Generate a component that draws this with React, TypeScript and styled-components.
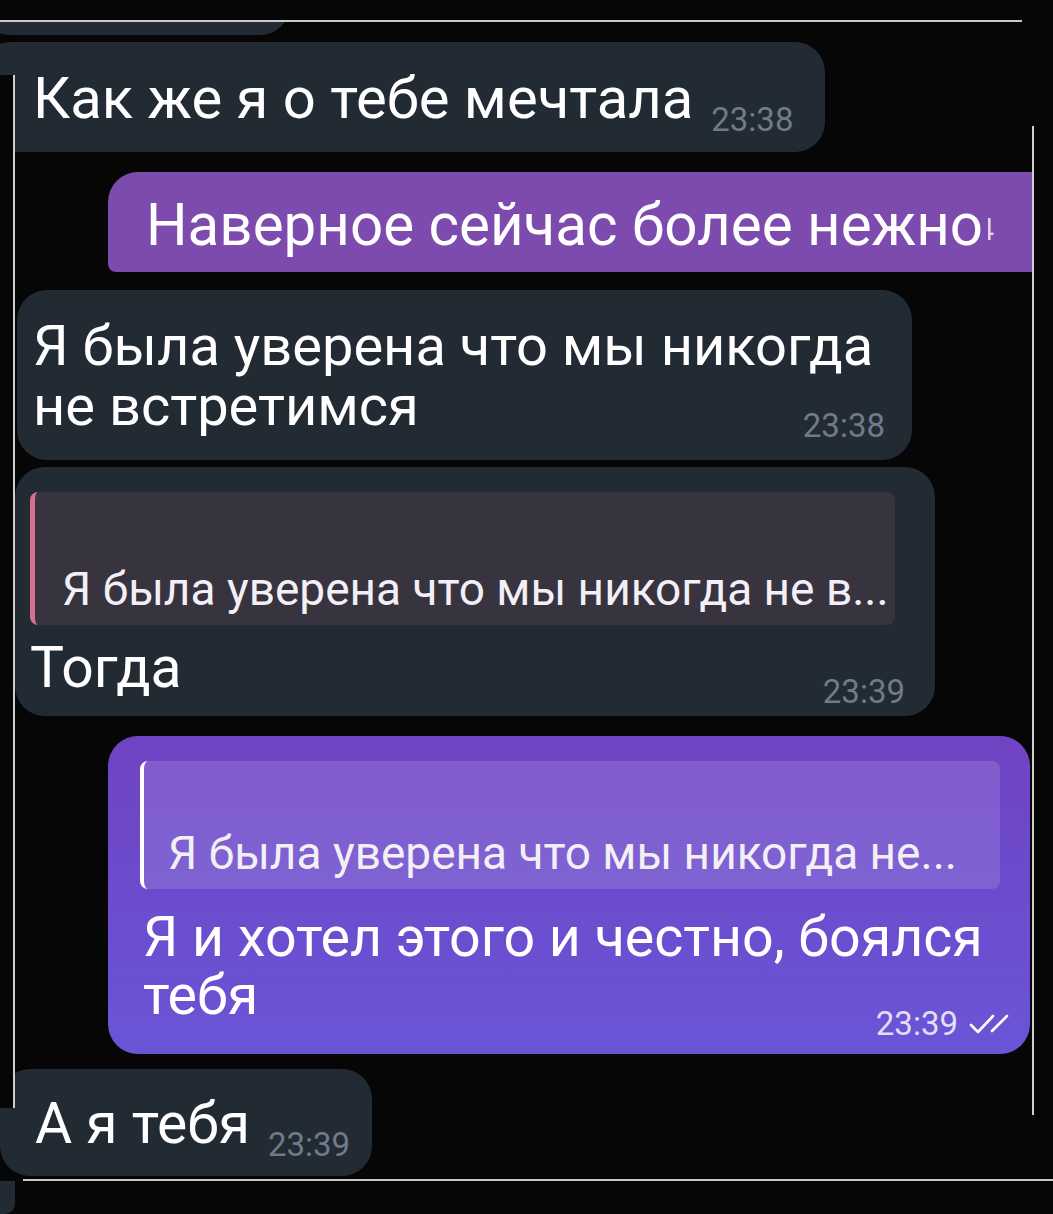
import React from 'react'
import styled, { createGlobalStyle } from 'styled-components'

const GlobalStyle = createGlobalStyle`
  html, body {
    margin: 0;
    padding: 0;
    background: #060607;
  }
  body {
    font-family: Roboto, 'Noto Sans', 'Liberation Sans', sans-serif;
  }
`

const Screen = styled.div`
  position: relative;
  width: 1053px;
  height: 1214px;
  overflow: hidden;
  background: #060607;
`

const Feed = styled.div`
  margin-top: 22px;
  height: 1157px;
  overflow: hidden;
  display: flex;
  flex-direction: column;
`

const Row = styled.div<{ $out?: boolean; $gap: number }>`
  display: flex;
  justify-content: ${({ $out }) => ($out ? 'flex-end' : 'flex-start')};
  margin-top: ${({ $gap }) => $gap}px;
  flex-shrink: 0;
`

type Tone = 'gray' | 'violet' | 'indigo'

const tones: Record<Tone, string> = {
  gray: '#222a33',
  violet: '#7d4aae',
  indigo: 'linear-gradient(180deg, #6f43c4 0%, #6c4ccd 50%, #6a55d6 100%)',
}

const Bubble = styled.div<{
  $tone: Tone
  $w: number
  $ml?: number
  $mr?: number
  $pad: string
  $radius?: string
}>`
  box-sizing: border-box;
  width: ${({ $w }) => $w}px;
  margin-left: ${({ $ml = 0 }) => $ml}px;
  margin-right: ${({ $mr = 0 }) => $mr}px;
  padding: ${({ $pad }) => $pad};
  background: ${({ $tone }) => tones[$tone]};
  border-radius: ${({ $radius = '30px' }) => $radius};
  color: #ffffff;
  flex-shrink: 0;
`

const Fragment = styled.div`
  box-sizing: border-box;
  width: 310px;
  height: 60px;
  margin-left: -20px;
  margin-top: -47px;
  background: #222a33;
  border-radius: 30px;
  flex-shrink: 0;
`

const Line = styled.div<{ $size: number; $lh: number; $indent?: number }>`
  font-size: ${({ $size }) => $size}px;
  line-height: ${({ $lh }) => $lh}px;
  padding-left: ${({ $indent = 0 }) => $indent}px;
  white-space: nowrap;
`

const LastLine = styled.div`
  display: flex;
  align-items: flex-end;
  justify-content: space-between;
  gap: 18px;
`

const Time = styled.span<{ $light?: boolean; $drop?: number }>`
  display: inline-flex;
  align-items: center;
  gap: 10px;
  font-size: 33px;
  line-height: 33px;
  color: ${({ $light }) => ($light ? 'rgba(255,255,255,0.82)' : '#6e7b88')};
  margin-bottom: ${({ $drop = 0 }) => -$drop}px;
  white-space: nowrap;
`

const Quote = styled.div<{ $tone: 'dark' | 'light'; $m: string; $pad: string }>`
  margin: ${({ $m }) => $m};
  padding: ${({ $pad }) => $pad};
  border-radius: 8px;
  background: ${({ $tone }) => ($tone === 'dark' ? '#38343f' : 'rgba(255, 255, 255, 0.13)')};
  border-left: ${({ $tone }) => ($tone === 'dark' ? '5px solid #d3718f' : '4px solid #ffffff')};
  color: #f2f0f6;
`

const Clip = styled.span`
  display: inline-block;
  width: 6px;
  overflow: hidden;
  direction: rtl;
  font-size: 31px;
  line-height: 31px;
  color: rgba(255, 255, 255, 0.8);
  vertical-align: baseline;
  margin-left: 5px;
`

const TopRule = styled.div`
  position: absolute;
  top: 20px;
  left: 0;
  width: 1022px;
  height: 2px;
  background: #c9c9c9;
`

const LeftMask = styled.div`
  position: absolute;
  top: 75px;
  left: 0;
  width: 13px;
  height: 1033px;
  background: #060607;
  border-right: 2px solid #cfcfcf;
`

const RightMask = styled.div`
  position: absolute;
  top: 126px;
  left: 1032px;
  width: 21px;
  height: 989px;
  background: #060607;
  border-left: 2px solid #cfcfcf;
`

const BottomRule = styled.div`
  position: absolute;
  top: 1179px;
  left: 23px;
  right: 0;
  height: 2px;
  background: #c9c9c9;
`

const Tail = styled.div`
  position: absolute;
  top: 1181px;
  left: 0;
  width: 15px;
  height: 33px;
  background: #222a33;
  border-radius: 0 0 10px 0;
`

const DoubleCheck = () => (
  <svg width="42" height="22" viewBox="0 0 42 22" fill="none">
    <path d="M3 12 L10 19 L25 3" stroke="#fff" strokeWidth="2.6" strokeLinecap="round" strokeLinejoin="round" />
    <path d="M24 18 L39 3" stroke="#fff" strokeWidth="2.6" strokeLinecap="round" />
  </svg>
)

const App = () => {
  return (
    <>
      <GlobalStyle />
      <Screen>
        <Feed>
          <Row $gap={0}>
            <Fragment />
          </Row>

          <Row $gap={7}>
            <Bubble $tone="gray" $w={845} $ml={-20} $pad="25px 35px 23px 53px">
              <LastLine>
                <Line $size={58} $lh={62}>Как же я о тебе мечтала</Line>
                <Time $drop={7}>23:38</Time>
              </LastLine>
            </Bubble>
          </Row>

          <Row $out $gap={20}>
            <Bubble $tone="violet" $w={966} $mr={-21} $pad="23px 0 17px 38px" $radius="30px 0 0 8px">
              <Line $size={58.3} $lh={60}>
                Наверное сейчас более нежно<Clip>4</Clip>
              </Line>
            </Bubble>
          </Row>

          <Row $gap={18}>
            <Bubble $tone="gray" $w={895} $ml={17} $pad="26px 27px 24px 16px">
              <Line $size={56} $lh={60}>Я была уверена что мы никогда</Line>
              <LastLine>
                <Line $size={56} $lh={60}>не встретимся</Line>
                <Time $drop={6}>23:38</Time>
              </LastLine>
            </Bubble>
          </Row>

          <Row $gap={7}>
            <Bubble $tone="gray" $w={920} $ml={15} $pad="25px 30px 18px 15px">
              <Quote $tone="dark" $m="0 10px 13px 0" $pad="72px 10px 11px 27px">
                <Line $size={46} $lh={50}>Я была уверена что мы никогда не в...</Line>
              </Quote>
              <LastLine>
                <Line $size={57} $lh={60}>Тогда</Line>
                <Time $drop={10}>23:39</Time>
              </LastLine>
            </Bubble>
          </Row>

          <Row $out $gap={20}>
            <Bubble $tone="indigo" $w={922} $mr={23} $pad="25px 20px 29px 32px">
              <Quote $tone="light" $m="0 10px 20px 0" $pad="67px 10px 11px 24px">
                <Line $size={46} $lh={50}>Я была уверена что мы никогда не...</Line>
              </Quote>
              <Line $size={55.5} $lh={58} $indent={3}>
                Я и хотел этого и честно, боялся
              </Line>
              <LastLine>
                <Line $size={55.5} $lh={58} $indent={3}>
                  тебя
                </Line>
                <Time $light $drop={15}>
                  23:39
                  <DoubleCheck />
                </Time>
              </LastLine>
            </Bubble>
          </Row>

          <Row $gap={15}>
            <Bubble $tone="gray" $w={372} $pad="25px 32px 22px 35px">
              <LastLine>
                <Line $size={57} $lh={60}>А я тебя</Line>
                <Time $drop={7}>23:39</Time>
              </LastLine>
            </Bubble>
          </Row>
        </Feed>

        <TopRule />
        <LeftMask />
        <RightMask />
        <BottomRule />
        <Tail />
      </Screen>
    </>
  )
}

export default App
